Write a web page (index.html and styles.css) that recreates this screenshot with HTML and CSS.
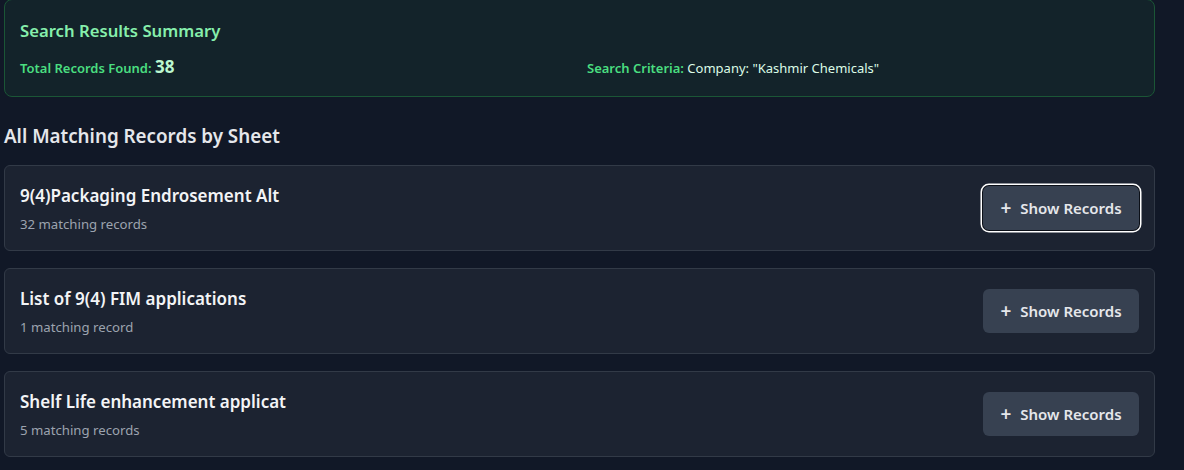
FILE: index.html
```html
<!DOCTYPE html>
<html>
<head>
<meta charset="utf-8">
<link rel="stylesheet" href="styles.css">
</head>
<body>
<div class="page">
  <section class="summary">
    <h2 class="summary-title">Search Results Summary</h2>
    <div class="summary-grid">
      <div class="summary-item"><span class="label">Total Records Found:</span> <span class="count">38</span></div>
      <div class="summary-item"><span class="label">Search Criteria:</span> <span class="value">Company: "Kashmir Chemicals"</span></div>
    </div>
  </section>
  <h3 class="section-title">All Matching Records by Sheet</h3>
  <div class="cards">
    <div class="card">
      <div class="card-info">
        <div class="card-title">9(4)Packaging Endrosement Alt</div>
        <div class="card-sub">32 matching records</div>
      </div>
      <button class="btn focused"><span class="plus">+</span>Show Records</button>
    </div>
    <div class="card">
      <div class="card-info">
        <div class="card-title">List of 9(4) FIM applications</div>
        <div class="card-sub">1 matching record</div>
      </div>
      <button class="btn"><span class="plus">+</span>Show Records</button>
    </div>
    <div class="card">
      <div class="card-info">
        <div class="card-title">Shelf Life enhancement applicat</div>
        <div class="card-sub">5 matching records</div>
      </div>
      <button class="btn"><span class="plus">+</span>Show Records</button>
    </div>
  </div>
</div>
</body>
</html>
```
FILE: styles.css
```css
html, body {
  margin: 0;
  padding: 0;
  background: #111827;
  font-family: "Noto Sans", "Open Sans", sans-serif;
  overflow: hidden;
}
.page {
  width: 1151px;
  margin-left: 4px;
  margin-top: -1px;
}
.summary {
  background: #13232a;
  border: 1px solid #1b5636;
  border-radius: 8px;
  padding: 17px 16px 16px 15px;
}
.summary-title {
  margin: 0;
  font-size: 16.7px;
  line-height: 28px;
  font-weight: 600;
  color: #86efac;
}
.summary-grid {
  display: grid;
  grid-template-columns: 1fr 1fr;
  column-gap: 16px;
  margin-top: 10px;
  align-items: center;
}
.summary-item {
  font-size: 13px;
  line-height: 24px;
}
.label {
  color: #4ade80;
  font-weight: 600;
}
.count {
  color: #bbf7d0;
  font-size: 17px;
  font-weight: 700;
}
.value {
  color: #dcfce7;
}
.section-title {
  margin: 25px 0 15px;
  font-size: 18.8px;
  line-height: 28px;
  font-weight: 600;
  color: #e5e7eb;
}
.cards {
  display: flex;
  flex-direction: column;
  gap: 17px;
}
.card {
  display: flex;
  align-items: center;
  justify-content: space-between;
  background: #1c2331;
  border: 1px solid #323a47;
  border-radius: 6px;
  padding: 16px 15px 16px 15px;
}
.card-title {
  font-size: 17px;
  line-height: 28px;
  font-weight: 600;
  color: #f3f4f6;
}
.card-sub {
  margin-top: 4px;
  font-size: 13.2px;
  line-height: 20px;
  color: #9ca3af;
}
.btn {
  display: flex;
  align-items: center;
  gap: 9px;
  height: 44px;
  width: 156px;
  justify-content: center;
  background: #374151;
  border: none;
  border-radius: 6px;
  color: #e5e7eb;
  font-family: inherit;
  font-size: 15px;
  font-weight: 600;
  padding: 0 16px;
}
.plus {
  font-size: 19px;
  font-weight: 600;
  line-height: 1;
}
.btn.focused {
  box-shadow: 0 0 0 1px #0b0f17, 0 0 0 2.5px #ffffff;
}
```
